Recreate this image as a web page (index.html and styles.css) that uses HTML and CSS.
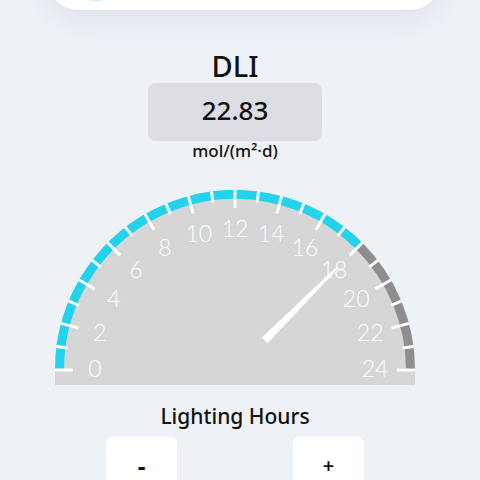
FILE: index.html
```html
<!DOCTYPE html>
<html lang="en">
<head>
  <meta charset="UTF-8">
  <meta name="viewport" content="width=device-width, initial-scale=1.0">
  <title>DLI Calculator</title>
  <link rel="stylesheet" href="styles.css">
</head>
<body>
  <!-- Top card (scrolled mostly out of view) -->
  <div class="top-card">
    <div class="card-icon"></div>
  </div>

  <main class="panel">
    <h2 class="title">DLI</h2>
    <div class="value-box">22.83</div>
    <div class="unit">mol/(m²·d)</div>

    <!-- Gauge: 0-24 hours, 7.5deg per hour -->
    <svg class="gauge" id="gauge" width="360" height="195" viewBox="0 0 360 195">
      <path class="gauge-bg" d="M0 180 A180 180 0 0 1 360 180 L360 195 L0 195 Z"/>
      <path class="arc-on" d="M4.5 180 A175.5 175.5 0 0 1 304.1 55.9"/>
      <path class="arc-off" d="M304.1 55.9 A175.5 175.5 0 0 1 355.5 180"/>
      <g id="ticks"></g>
      <g id="labels"></g>
      <polygon class="needle" id="needle" points="42,-4 145,-1 145,1 42,4"/>
    </svg>

    <div class="hours-label">Lighting Hours</div>
    <div class="stepper">
      <button class="step-btn minus">-</button>
      <button class="step-btn">+</button>
    </div>
  </main>

  <script>
    const cx = 180, cy = 180;
    const hours = 18;
    const ns = "http://www.w3.org/2000/svg";

    function polar(r, h) {
      const a = (180 - h * 7.5) * Math.PI / 180;
      return [cx + r * Math.cos(a), cy - r * Math.sin(a)];
    }

    const ticks = document.getElementById("ticks");
    const labels = document.getElementById("labels");

    for (let h = 0; h <= 24; h++) {
      const major = h % 2 === 0;
      const [x1, y1] = polar(180, h);
      const [x2, y2] = polar(major ? 162 : 169, h);
      const line = document.createElementNS(ns, "line");
      line.setAttribute("x1", x1.toFixed(1));
      line.setAttribute("y1", y1.toFixed(1));
      line.setAttribute("x2", x2.toFixed(1));
      line.setAttribute("y2", y2.toFixed(1));
      line.setAttribute("class", "tick");
      ticks.appendChild(line);

      if (major) {
        const [tx, ty] = polar(140, h);
        const t = document.createElementNS(ns, "text");
        t.setAttribute("x", tx.toFixed(1));
        t.setAttribute("y", (ty - 2).toFixed(1));
        t.setAttribute("class", "gauge-num");
        t.textContent = h;
        labels.appendChild(t);
      }
    }

    // point the needle at the current hours
    document.getElementById("needle")
      .setAttribute("transform", `translate(${cx} ${cy}) rotate(${-(180 - hours * 7.5)})`);
  </script>
</body>
</html>
```

FILE: styles.css
```css
/* DLI page */
body {
  margin: 0;
  background-color: #eef1f6;
  font-family: "Noto Sans", sans-serif;
  color: #111;
  overflow: hidden;
}

.top-card {
  width: 392px;
  height: 70px;
  margin: -60px 0 0 48px;
  background: #fff;
  border-radius: 0 0 30px 30px;
  box-shadow: 0 10px 24px rgba(60, 70, 90, 0.08);
  display: flex;
  align-items: flex-end;
  padding: 0 0 8px 32px;
  box-sizing: border-box;
}

.card-icon {
  width: 32px;
  height: 32px;
  border-radius: 50%;
  background: #dcf3f8;
}

.panel {
  width: 470px;
  display: flex;
  flex-direction: column;
  align-items: center;
}

.title {
  margin: 39px 0 0;
  font-size: 29px;
  line-height: 34px;
  font-weight: 500;
}

.value-box {
  width: 174px;
  height: 58px;
  box-sizing: border-box;
  padding-bottom: 4px;
  background: #dcdde3;
  border-radius: 8px;
  font-size: 26px;
  font-weight: 500;
  line-height: 54px;
  text-align: center;
}

.unit {
  font-size: 17px;
  line-height: 20px;
  font-weight: 500;
}

.gauge {
  display: block;
  margin-top: 29px;
}

.gauge-bg {
  fill: #d6d6d6;
}

.arc-on,
.arc-off {
  fill: none;
  stroke-width: 9;
}

.arc-on {
  stroke: #22d3ee;
}

.arc-off {
  stroke: #8e8e8e;
}

.tick {
  stroke: #fff;
  stroke-width: 3;
}

.gauge-num {
  fill: #fff;
  font-family: Lato, sans-serif;
  font-weight: 300;
  font-size: 23px;
  text-anchor: middle;
  dominant-baseline: central;
}

.needle {
  fill: #fff;
}

.hours-label {
  margin-top: 18px;
  font-size: 21px;
  line-height: 26px;
  font-weight: 500;
}

.stepper {
  display: flex;
  gap: 116px;
  margin-top: 8px;
}

.step-btn {
  width: 71px;
  height: 56px;
  border: none;
  border-radius: 6px;
  background: #fff;
  font-family: "Noto Sans", sans-serif;
  font-size: 20px;
  font-weight: 600;
  color: #111;
}

.step-btn.minus {
  font-size: 24px;
  font-weight: 700;
}
```
